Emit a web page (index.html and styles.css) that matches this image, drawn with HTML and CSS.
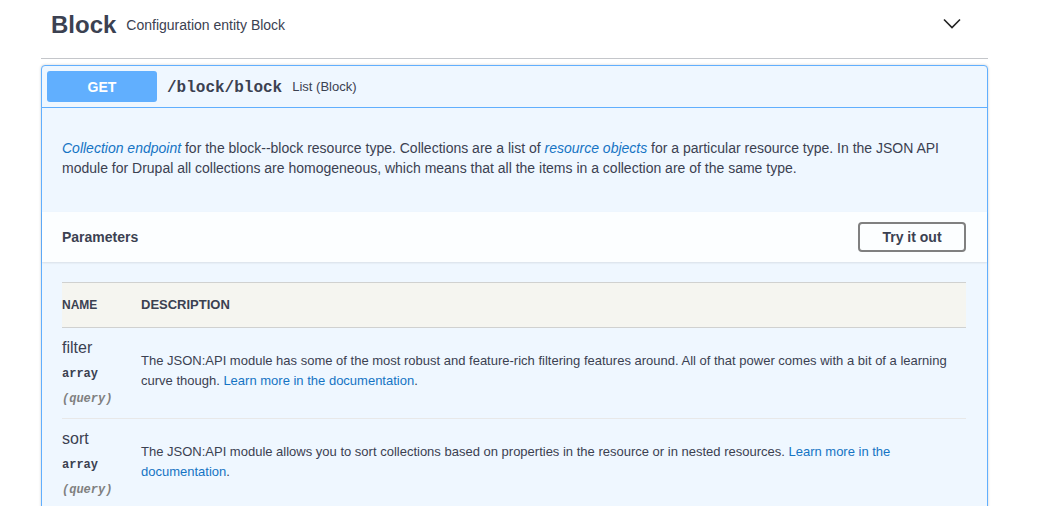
FILE: index.html
```html
<!DOCTYPE html>
<html lang="en">
<head>
    <meta charset="UTF-8">
    <meta name="viewport" content="width=device-width, initial-scale=1.0">
    <title>Block - API</title>
    <link rel="stylesheet" href="styles.css">
</head>
<body>
    <div class="tag-section">
        <h4 class="tag-heading">
            <span class="tag-name">Block</span>
            <small class="tag-desc">Configuration entity Block</small>
            <button class="expand" aria-label="Collapse">
                <svg width="20" height="20" viewBox="0 0 20 20">
                    <path d="M2 4.5 L10 12.5 L18 4.5" fill="none" stroke="#222" stroke-width="1.6"/>
                </svg>
            </button>
        </h4>

        <div class="opblock">
            <div class="summary">
                <span class="method">GET</span>
                <span class="path">/block/block</span>
                <span class="summary-desc">List (Block)</span>
            </div>

            <div class="description">
                <p><a href="#"><em>Collection endpoint</em></a> for the block--block resource type. Collections are a list of <a href="#"><em>resource objects</em></a> for a particular resource type. In the JSON API module for Drupal all collections are homogeneous, which means that all the items in a collection are of the same type.</p>
            </div>

            <div class="params-header">
                <h4>Parameters</h4>
                <button class="try-out">Try it out</button>
            </div>

            <div class="params-body">
                <div class="params-table">
                    <div class="row head">
                        <div class="col-name">Name</div>
                        <div class="col-desc">Description</div>
                    </div>
                    <div class="row">
                        <div class="col-name">
                            <div class="param-name">filter</div>
                            <div class="param-type">array</div>
                            <div class="param-in">(query)</div>
                        </div>
                        <div class="col-desc">
                            The JSON:API module has some of the most robust and feature-rich filtering features around. All of that power comes with a bit of a learning curve though. <a href="#">Learn more in the documentation</a>.
                        </div>
                    </div>
                    <div class="row">
                        <div class="col-name">
                            <div class="param-name">sort</div>
                            <div class="param-type">array</div>
                            <div class="param-in">(query)</div>
                        </div>
                        <div class="col-desc">
                            The JSON:API module allows you to sort collections based on properties in the resource or in nested resources. <a href="#">Learn more in the documentation</a>.
                        </div>
                    </div>
                </div>
            </div>
        </div>
    </div>
</body>
</html>
```

FILE: styles.css
```css
html,
body {
    overflow: hidden; /* page continues below the fold */
}

body {
    margin: 0;
    font-family: "Liberation Sans", Arial, sans-serif;
    color: #3b4151;
    background: #ffffff;
}

a {
    color: #1574c4;
    text-decoration: none;
}

.tag-section {
    width: 947px;
    margin-left: 41px;
}

.tag-heading {
    display: flex;
    align-items: center;
    margin: 0;
    padding: 6px 26px 14px 10px;
    height: 38px;
    border-bottom: 1px solid rgba(59, 65, 81, 0.3);
}

.tag-name {
    font-size: 24px;
    font-weight: bold;
    line-height: 38px;
}

.tag-desc {
    font-size: 14px;
    font-weight: normal;
    padding: 0 10px;
    flex: 1;
}

.expand {
    border: none;
    background: none;
    padding: 0;
    width: 20px;
    height: 20px;
}

/* operation block */
.opblock {
    margin-top: 6px;
    border: 1px solid #61affe;
    border-radius: 4px;
    background: #eff7ff;
    box-shadow: 0 0 3px rgba(0, 0, 0, 0.19);
}

.summary {
    display: flex;
    align-items: center;
    padding: 5px;
    border-bottom: 1px solid #61affe;
}

.method {
    width: 110px;
    height: 31px;
    line-height: 33px;
    text-align: center;
    background: #61affe;
    color: #ffffff;
    font-size: 14px;
    font-weight: bold;
    border-radius: 3px;
}

.path {
    padding: 2px 10px 0;
    font-family: "Liberation Mono", "Courier New", monospace;
    font-size: 16px;
    font-weight: bold;
}

.summary-desc {
    font-size: 13px;
}

.description {
    padding: 30px 20px 34px;
    font-size: 14px;
    line-height: 20px;
}

.description p {
    margin: 0;
}

.params-header {
    display: flex;
    align-items: center;
    justify-content: space-between;
    min-height: 50px;
    padding: 0 21px 0 20px;
    background: rgba(255, 255, 255, 0.8);
    box-shadow: 0 1px 2px rgba(0, 0, 0, 0.1);
}

.params-header h4 {
    margin: 0;
    font-size: 14px;
}

.try-out {
    width: 108px;
    height: 30px;
    font-family: inherit;
    font-size: 14px;
    font-weight: bold;
    color: #3b4151;
    background: transparent;
    border: 2px solid #808080;
    border-radius: 4px;
}

.params-body {
    padding: 20px 21px 20px 20px;
}

.row {
    display: grid;
    grid-template-columns: 79px 1fr;
    border-bottom: 1px solid #e8e8e8;
}

.row.head {
    height: 44px;
    align-items: center;
    background: #f5f5f0;
    border-top: 1px solid rgba(59, 65, 81, 0.2);
    border-bottom: 1px solid rgba(59, 65, 81, 0.2);
    font-size: 12px;
    font-weight: bold;
    text-transform: uppercase;
}

.row .col-name {
    padding: 11px 0 12px;
}

.row.head .col-name {
    padding: 0;
}

.param-name {
    font-size: 16px;
    line-height: 18px;
}

.param-type,
.param-in {
    font-family: "Liberation Mono", "Courier New", monospace;
    font-size: 12px;
    line-height: 14px;
}

.param-type {
    margin-top: 10px;
    font-weight: bold;
}

.param-in {
    margin-top: 11px;
    font-style: italic;
    font-weight: bold;
    color: #808080;
}

.row .col-desc {
    padding-top: 23px;
    font-size: 13px;
    line-height: 20px;
}

.row.head .col-desc {
    padding-top: 0;
}
```
